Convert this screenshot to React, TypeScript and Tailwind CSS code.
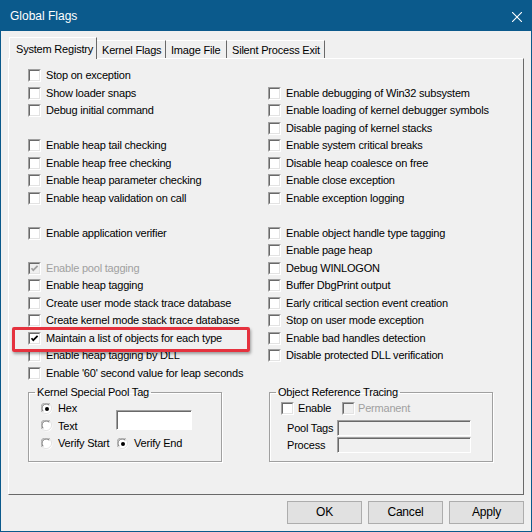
import React from 'react';

type Flag = { label: string; checked?: boolean; disabled?: boolean } | null;

const leftFlags: Flag[] = [
  { label: 'Stop on exception' },
  { label: 'Show loader snaps' },
  { label: 'Debug initial command' },
  null,
  { label: 'Enable heap tail checking' },
  { label: 'Enable heap free checking' },
  { label: 'Enable heap parameter checking' },
  { label: 'Enable heap validation on call' },
  null,
  { label: 'Enable application verifier' },
  null,
  { label: 'Enable pool tagging', checked: true, disabled: true },
  { label: 'Enable heap tagging' },
  { label: 'Create user mode stack trace database' },
  { label: 'Create kernel mode stack trace database' },
  { label: 'Maintain a list of objects for each type', checked: true },
  { label: 'Enable heap tagging by DLL' },
  { label: "Enable '60' second value for leap seconds" },
];

const rightFlags: Flag[] = [
  null,
  { label: 'Enable debugging of Win32 subsystem' },
  { label: 'Enable loading of kernel debugger symbols' },
  { label: 'Disable paging of kernel stacks' },
  { label: 'Enable system critical breaks' },
  { label: 'Disable heap coalesce on free' },
  { label: 'Enable close exception' },
  { label: 'Enable exception logging' },
  null,
  { label: 'Enable object handle type tagging' },
  { label: 'Enable page heap' },
  { label: 'Debug WINLOGON' },
  { label: 'Buffer DbgPrint output' },
  { label: 'Early critical section event creation' },
  { label: 'Stop on user mode exception' },
  { label: 'Enable bad handles detection' },
  { label: 'Disable protected DLL verification' },
];

const tabs = [
  { label: 'Kernel Flags', w: 'w-[69px]' },
  { label: 'Image File', w: 'w-[61px]' },
  { label: 'Silent Process Exit', w: 'w-[98px]' },
];

// sunken 3D checkbox
function CheckBox({ checked, disabled }: { checked?: boolean; disabled?: boolean }) {
  return (
    <span
      className={`relative block w-[13px] h-[13px] shrink-0 border border-t-[#a0a0a0] border-l-[#a0a0a0] border-r-white border-b-white ${
        disabled ? 'bg-[#f0f0f0]' : 'bg-white'
      }`}
    >
      <span className="absolute inset-0 border border-t-[#696969] border-l-[#696969] border-r-[#e3e3e3] border-b-[#e3e3e3]" />
      {checked && (
        <svg className="absolute -left-px -top-px" width="13" height="13" viewBox="0 0 13 13">
          <path
            d="M3.5 6.2 L5.3 8.2 L9.6 3.9"
            fill="none"
            stroke={disabled ? '#a0a0a0' : '#000'}
            strokeWidth="1.7"
          />
        </svg>
      )}
    </span>
  );
}

function Radio({ on }: { on?: boolean }) {
  return (
    <svg width="12" height="12" viewBox="0 0 12 12" className="shrink-0">
      <circle cx="6" cy="6" r="5.5" fill="#fff" />
      <path d="M1.2 9 A5.2 5.2 0 0 1 9 1.2" fill="none" stroke="#a0a0a0" strokeWidth="1" />
      <path d="M2.2 8.2 A4.2 4.2 0 0 1 8.2 2.2" fill="none" stroke="#696969" strokeWidth="1" />
      <path d="M9 1.2 A5.2 5.2 0 0 1 1.2 9" fill="none" stroke="#e3e3e3" strokeWidth="1" />
      {on && <circle cx="6" cy="6" r="2" fill="#000" />}
    </svg>
  );
}

function FlagRow({ flag }: { flag: Flag }) {
  return (
    <div className="h-[17.5px] flex items-center gap-[5px]">
      {flag && (
        <>
          <CheckBox checked={flag.checked} disabled={flag.disabled} />
          <span className={`whitespace-nowrap ${flag.disabled ? 'text-[#a0a0a0]' : 'text-black'}`}>
            {flag.label}
          </span>
        </>
      )}
    </div>
  );
}

function Button({ children }: { children: React.ReactNode }) {
  return (
    <button className="w-[75px] h-[23px] border border-[#adadad] bg-[#e1e1e1] text-black text-[12px]">
      {children}
    </button>
  );
}

export default function App() {
  return (
    <div className="relative w-[532px] h-[532px] flex flex-col border border-[#0b5a8c] bg-[#f0f0f0] text-[11px] leading-[13px] tracking-[-0.2px] font-['Liberation_Sans',Arial,sans-serif] text-black">
      {/* caption */}
      <div className="h-[30px] shrink-0 bg-[#0b5a8c] flex items-center justify-between pl-[9px] pt-px">
        <span className="text-white text-[12px] tracking-normal">Global Flags</span>
        <svg className="mr-[9px]" width="10" height="10" viewBox="0 0 10 10">
          <path d="M0 0 L10 10 M10 0 L0 10" stroke="#fff" strokeWidth="1.1" />
        </svg>
      </div>

      <div className="flex flex-col px-[7px] pt-[6px]">
        {/* tab strip */}
        <div className="flex items-end h-[22px] text-[11px]">
          <div className="relative z-10 ml-[1px] w-[88px] h-[22px] pl-[6px] pt-[5px] whitespace-nowrap bg-[#f0f0f0] border-l border-t border-r border-l-white border-t-white border-r-[#696969]">
            System Registry
          </div>
          {tabs.map((t) => (
            <div
              key={t.label}
              className={`${t.w} h-[19px] pl-[5px] pt-[3px] border-t border-r border-t-white border-r-[#696969] whitespace-nowrap`}
            >
              {t.label}
            </div>
          ))}
        </div>

        {/* tab page */}
        <div className="relative h-[437px] -mt-px bg-[#f0f0f0] border border-l-white border-t-white border-r-[#696969] border-b-[#696969] pt-[8px] pl-[19px]">
          <div className="flex">
            <div className="w-[240px] flex flex-col">
              {leftFlags.map((f, i) => (
                <FlagRow key={i} flag={f} />
              ))}
            </div>
            <div className="flex flex-col">
              {rightFlags.map((f, i) => (
                <FlagRow key={i} flag={f} />
              ))}
            </div>
          </div>

          <div className="flex mt-[3px]">
            <fieldset className="w-[194px] h-[77px] border border-[#a0a0a0] shadow-[inset_1px_1px_0_#fff,1px_1px_0_#fff]">
              <legend className="ml-[6px] px-[2px] leading-[14px]">Kernel Special Pool Tag</legend>
              <div className="grid grid-cols-[75px_1fr] grid-rows-[17.5px_17.5px_17.5px] pl-[12px] pt-[1px]">
                <div className="flex items-center gap-[5px]">
                  <Radio on />
                  <span>Hex</span>
                </div>
                <div className="row-span-2 mt-[10px] w-[76px] h-[20px] bg-white border border-t-[#a0a0a0] border-l-[#a0a0a0] border-r-white border-b-white shadow-[inset_1px_1px_0_#696969]" />
                <div className="flex items-center gap-[5px]">
                  <Radio />
                  <span>Text</span>
                </div>
                <div className="flex items-center gap-[5px]">
                  <Radio />
                  <span className="whitespace-nowrap">Verify Start</span>
                </div>
                <div className="flex items-center gap-[5px] ml-[1px]">
                  <Radio on />
                  <span className="whitespace-nowrap">Verify End</span>
                </div>
              </div>
            </fieldset>

            <fieldset className="ml-[47px] w-[224px] h-[77px] border border-[#a0a0a0] shadow-[inset_1px_1px_0_#fff,1px_1px_0_#fff]">
              <legend className="ml-[6px] px-[2px] leading-[14px]">Object Reference Tracing</legend>
              <div className="flex flex-col pl-[11px]">
                <div className="h-[18px] flex items-center">
                  <div className="w-[61px] flex items-center gap-[4px]">
                    <CheckBox />
                    <span>Enable</span>
                  </div>
                  <div className="flex items-center gap-[3px]">
                    <CheckBox disabled />
                    <span className="text-[#a0a0a0]">Permanent</span>
                  </div>
                </div>
                <div className="mt-[3px] h-[16px] flex items-center">
                  <span className="ml-[6px] w-[50px]">Pool Tags</span>
                  <div className="w-[134px] h-[16px] bg-[#f0f0f0] border border-t-[#a0a0a0] border-l-[#a0a0a0] border-r-white border-b-white shadow-[inset_1px_1px_0_#696969]" />
                </div>
                <div className="mt-[1px] h-[16px] flex items-center">
                  <span className="ml-[6px] w-[50px]">Process</span>
                  <div className="w-[134px] h-[16px] bg-[#f0f0f0] border border-t-[#a0a0a0] border-l-[#a0a0a0] border-r-white border-b-white shadow-[inset_1px_1px_0_#696969]" />
                </div>
              </div>
            </fieldset>
          </div>
        </div>

        {/* dialog buttons */}
        <div className="flex justify-end gap-[6px] mt-[6px] text-[11px]">
          <Button>OK</Button>
          <Button>Cancel</Button>
          <Button>Apply</Button>
        </div>
      </div>

      {/* highlight around the selected flag */}
      <div className="absolute left-[11px] top-[326px] w-[238px] h-[25px] border-[3px] border-[#e5323e] rounded-[2px] shadow-[1px_2px_3px_rgba(0,0,0,0.35)]" />
    </div>
  );
}
